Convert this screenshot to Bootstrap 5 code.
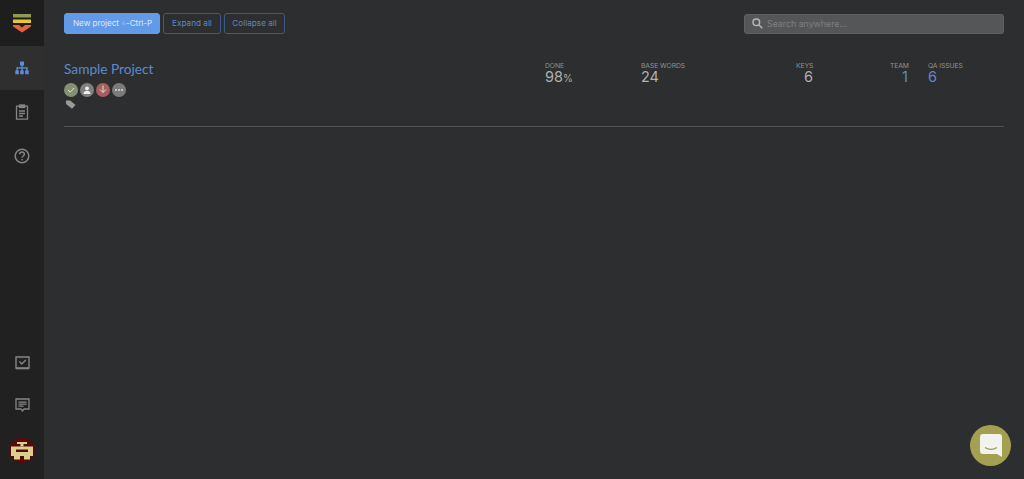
<!DOCTYPE html>
<html lang="en">
<head>
<meta charset="utf-8">
<title>Projects</title>
<link href="https://cdn.jsdelivr.net/npm/bootstrap@5.3.0/dist/css/bootstrap.min.css" rel="stylesheet">
<style>
html,body{height:100%;}
body{background:#2d2e2f;color:#b4b4b4;font-family:"Inter","Liberation Sans",sans-serif;overflow:hidden;}
.shell{height:479px;}
.rail{width:44px;background:#212121;flex:none;padding-bottom:6px;}
.rail-item{height:44px;color:#8f8f8f;}
.rail-short{height:41px;}
.rail-logo{height:46px;background:#1e1e1e;}
.rail-active{background:#2f2f2f;color:#5b8fdb;}
.rail-user{height:46px;}
.main-area{padding:13px 20px 0 20px;}
.tb-btn{font-size:8.200px;line-height:1;height:21px;padding:0 8px;border-radius:3px;font-family:"Inter","Liberation Sans",sans-serif;display:flex;align-items:center;white-space:nowrap;}
.tb-primary{background:#639ae8;color:#dce8f9;border:1px solid #639ae8;padding:0 7px 0 8px;letter-spacing:-.08px;}
.tb-outline{background:transparent;color:#5f86bd;border:1px solid #3c5a85;}
.tb-collapse{padding:0 7.500px;}
.tb-gap{gap:3px;}
.tb-dim{color:#a8c6f2;font-size:5px;margin-left:2px;}
.search-box{width:260px;height:20px;background:#555657;border:1px solid #606162;border-radius:3px;padding:0 7px;}
.search-text{font-size:8.800px;color:#7f8081;}
.proj-row{height:81px;padding-top:16px;border-bottom:1px solid #515256;margin-top:12px;}
.proj-name{font-family:"Lato","Liberation Sans",sans-serif;font-size:13.700px;line-height:1;color:#5b8ad0;text-decoration:none;display:block;}
.proj-left{width:481px;}
.dot{width:14px;height:14px;border-radius:50%;}
.dot-ok{background:#84906f;}
.dot-user{background:#808080;}
.dot-down{background:#a55f5f;}
.dot-more{background:#7b7b7b;}
.status-row{gap:2px;margin-top:7px;}
.tag-wrap{margin-top:3px;padding-left:2px;height:12px;}
.stat-label{font-size:6.800px;line-height:1;color:#929292;text-transform:uppercase;letter-spacing:-.1px;white-space:nowrap;margin-top:1px;}
.stat-val{font-size:14.500px;line-height:14px;color:#b0b0b0;margin-top:0;}
.stat-link{color:#5b8ad0;}
.stat-pct{font-size:10px;}
.st-done{width:96px;}
.st-base{width:155px;}
.st-keys{width:94px;}
.st-keys .stat-val{padding-left:8px;}
.st-team{width:38px;}
.st-team .stat-val{text-align:right;padding-right:20px;}
.st-qa{width:40px;}
.fab{position:fixed;right:13px;bottom:13px;width:41px;height:41px;border-radius:50%;background:#a3a050;}
</style>
</head>
<body>
<div class="d-flex shell">
  <nav class="rail d-flex flex-column">
    <div class="rail-logo d-flex align-items-center justify-content-center">
      <svg width="18" height="19" viewBox="0 0 18 19"><rect x="0" y="0" width="18" height="3.500" fill="#8f9a52"/><rect x="0" y="5.500" width="18" height="3.500" fill="#e6c92f"/><path d="M0 11h6l3 2.500 3-2.500h6v1.500l-9 6-9-6z" fill="#e8643a"/></svg>
    </div>
    <div class="rail-item rail-active d-flex align-items-center justify-content-center">
      <svg width="14" height="14" viewBox="0 0 14 14" fill="#5b8fdb"><rect x="5" y="0.500" width="4" height="4" rx=".6"/><rect x="6.400" y="4" width="1.300" height="3"/><rect x="1.500" y="6.300" width="11" height="1.300"/><rect x="1.500" y="6.500" width="1.300" height="3"/><rect x="6.400" y="6.500" width="1.300" height="3"/><rect x="11.200" y="6.500" width="1.300" height="3"/><rect x="0.300" y="9.300" width="3.500" height="4" rx=".6"/><rect x="5.200" y="9.300" width="3.500" height="4" rx=".6"/><rect x="10.200" y="9.300" width="3.500" height="4" rx=".6"/></svg>
    </div>
    <div class="rail-item d-flex align-items-center justify-content-center">
      <svg width="14" height="16" viewBox="0 0 14 16" fill="none" stroke="#858585" stroke-width="1.300"><path d="M4.500 2.200H1.500v13h11v-13H9.500"/><rect x="4.500" y="1" width="5" height="2.500" fill="#858585"/><path d="M4 7h6M4 9.500h6M4 12h4"/></svg>
    </div>
    <div class="rail-item d-flex align-items-center justify-content-center">
      <svg width="16" height="16" viewBox="0 0 16 16" fill="none" stroke="#858585" stroke-width="1.500"><circle cx="8" cy="8" r="6.800"/><path d="M5.700 6.300c0-3 4.700-3 4.700-.1 0 1.800-2.400 1.800-2.400 3.600"/><circle cx="8" cy="11.700" r=".5" fill="#858585" stroke-width=".8"/></svg>
    </div>
    <div class="flex-grow-1"></div>
    <div class="rail-short d-flex align-items-center justify-content-center">
      <svg width="15" height="14" viewBox="0 0 15 14" fill="none" stroke="#858585" stroke-width="1.400"><path d="M1 1h13v11H1z"/><path d="M1 12.500h13" stroke-width="1.600"/><path d="M4.500 5.500l2.300 2.500 4-4"/></svg>
    </div>
    <div class="rail-item d-flex align-items-center justify-content-center">
      <svg width="15" height="15" viewBox="0 0 15 15" fill="none" stroke="#858585" stroke-width="1.300"><path d="M1 1h13v10H9l-1.500 2L6 11H1z"/><path d="M3.500 4.200h8M3.500 6.200h8M3.500 8.200h5"/></svg>
    </div>
    <div class="rail-user d-flex align-items-center justify-content-center">
      <svg width="26" height="26" viewBox="0 0 26 26"><circle cx="13" cy="13" r="13" fill="#520c0c"/><g fill="#dccf8e"><rect x="8" y="5" width="10" height="2"/><rect x="11.500" y="7" width="3" height="2.500"/><rect x="2" y="9.500" width="22" height="9.500"/><rect x="5" y="19" width="6" height="3.500"/><rect x="15" y="19" width="6" height="3.500"/></g><rect x="7" y="12.500" width="12" height="2.500" fill="#520c0c"/></svg>
    </div>
  </nav>
  <main class="main-area flex-grow-1">
    <div class="d-flex align-items-center">
      <div class="d-flex tb-gap">
        <button type="button" class="tb-btn tb-primary">New project<span class="tb-dim">⇧</span>-Ctrl-P</button>
        <button type="button" class="tb-btn tb-outline">Expand all</button>
        <button type="button" class="tb-btn tb-outline tb-collapse">Collapse all</button>
      </div>
      <div class="ms-auto search-box d-flex align-items-center gap-1">
        <svg width="11" height="11" viewBox="0 0 11 11" fill="none" stroke="#b5b5b5" stroke-width="1.500"><circle cx="4.300" cy="4.300" r="3.300"/><path d="M6.800 6.800l3.500 3.500"/></svg>
        <span class="search-text">Search anywhere...</span>
      </div>
    </div>
    <div class="proj-row d-flex">
      <div class="proj-left">
        <a class="proj-name" href="#">Sample Project</a>
        <div class="d-flex status-row">
          <span class="dot dot-ok d-flex align-items-center justify-content-center"><svg width="8" height="8" viewBox="0 0 8 8" fill="none" stroke="#dfe3d6" stroke-width="1"><path d="M1 4l2.200 2.200L7 2"/></svg></span>
          <span class="dot dot-user d-flex align-items-center justify-content-center"><svg width="8" height="8" viewBox="0 0 8 8" fill="#eee"><circle cx="4" cy="2.300" r="1.900"/><path d="M.5 8c0-2.500 1.500-3.200 3.500-3.200S7.500 5.500 7.500 8z"/></svg></span>
          <span class="dot dot-down d-flex align-items-center justify-content-center"><svg width="8" height="9" viewBox="0 0 8 9" fill="none" stroke="#eadada" stroke-width="1"><path d="M4 .5v7M1 4.500l3 3 3-3"/></svg></span>
          <span class="dot dot-more d-flex align-items-center justify-content-center"><svg width="8" height="2" viewBox="0 0 8 2" fill="#e5e5e5"><circle cx="1" cy="1" r=".9"/><circle cx="4" cy="1" r=".9"/><circle cx="7" cy="1" r=".9"/></svg></span>
        </div>
        <div class="tag-wrap d-flex"><svg width="10" height="9" viewBox="0 0 10 9" fill="#9a9a9a"><path d="M0 .5h4.300L9.500 5 6 8.700 0 4z"/></svg></div>
      </div>
      <div class="st-done"><div class="stat-label">Done</div><div class="stat-val">98<span class="stat-pct">%</span></div></div>
      <div class="st-base"><div class="stat-label">Base words</div><div class="stat-val">24</div></div>
      <div class="st-keys"><div class="stat-label">Keys</div><div class="stat-val">6</div></div>
      <div class="st-team"><div class="stat-label">Team</div><div class="stat-val stat-link">1</div></div>
      <div class="st-qa"><div class="stat-label">QA issues</div><div class="stat-val stat-link">6</div></div>
    </div>
  </main>
</div>
<div class="fab d-flex align-items-center justify-content-center">
  <svg width="22" height="23" viewBox="0 0 22 23"><path d="M3 0h16a3 3 0 0 1 3 3v20l-5-3H3a3 3 0 0 1-3-3V3a3 3 0 0 1 3-3z" fill="#f2f2ee"/><path d="M5 13.500c3.500 2.500 8.500 2.500 12 0" fill="none" stroke="#a3a050" stroke-width="1.200"/></svg>
</div>
</body>
</html>
